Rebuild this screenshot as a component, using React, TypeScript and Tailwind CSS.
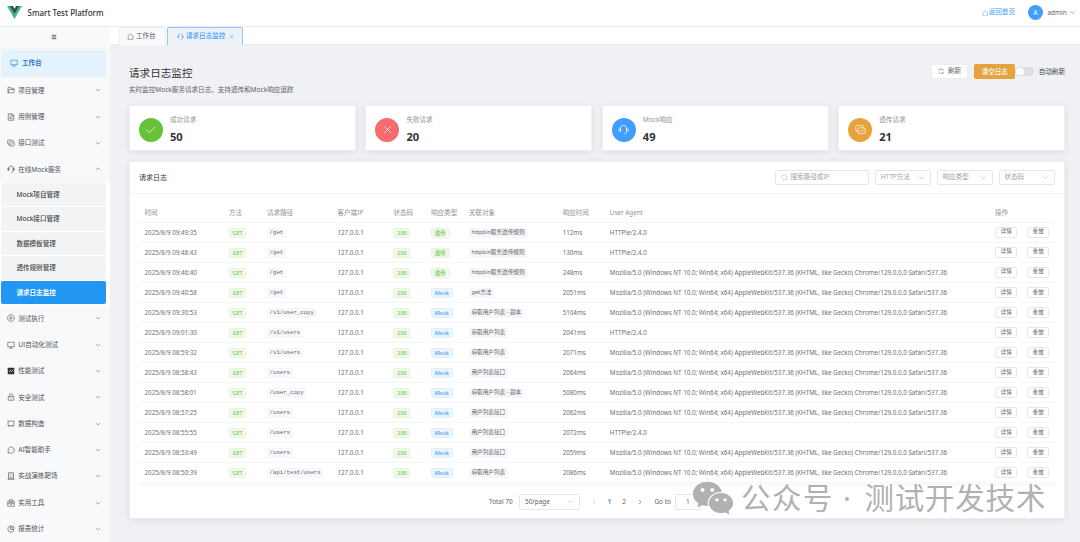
import React from "react";
import { AiFillWechat } from "react-icons/ai";

const shapes: Record<string, React.ReactNode> = {
  house: <path d="M2.5 6.3v8.2h11V6.3L8 1.7z" />,
  monitor: <path d="M1.5 2.5h13v9h-13zM8 11.5v2.7M4.5 14.2h7" />,
  folder: <path d="M2 13.5v-11h4.500l1.500 2h5.500v2.500M2 13.500 4.200 7H15l-2 6.500z" />,
  doc: <path d="M2.500 1.500h7.500l3.500 3.500v9.500h-11zM9.800 1.700v3.500h3.500M5 8h6M5 11h6M5 5h2" />,
  link: <path d="M5 10.500H3.800A2.800 2.800 0 0 1 1 7.700V4.800A2.800 2.800 0 0 1 3.800 2h5.400A2.800 2.800 0 0 1 12 4.800M11 5.500h1.200A2.800 2.800 0 0 1 15 8.300v2.900a2.800 2.800 0 0 1-2.800 2.800H6.800A2.800 2.800 0 0 1 4 11.200V8.300a2.800 2.800 0 0 1 2.800-2.800zM6.500 10.500h2.700A2.800 2.800 0 0 0 12 7.700" />,
  headset: <path d="M3.500 10.800V6.500a4.500 4.500 0 0 1 9 0v4.300c0 2.200-1.500 3.700-4 3.700M3.500 6.200C2 6.200 1 7.200 1 8.500s1 2.300 2.500 2.300zM12.500 6.200C14 6.200 15 7.200 15 8.500s-1 2.300-2.500 2.300z" />,
  play: <path d="M8 1.200a6.800 6.800 0 1 0 .01 0zM6.300 5v6l4.800-3z" />,
  lock: <path d="M2.500 7h11v7.500h-11zM4.800 7V4.500a3.200 3.200 0 0 1 6.400 0V7M8 9.500v2.500" />,
  board: <path d="M1 2.200h14M2.200 2.200v9h11.600v-9M5.500 11.200 4 14.500M10.500 11.200l1.500 3.300" />,
  chat: <path d="M2 14.300 2.600 11A6.300 6.300 0 1 1 5 13.700zM5 8h.8M7.600 8h.8M10.200 8h.8" />,
  building: <path d="M3 14.500v-13h10v13M1 14.500h14M5.300 4h1.500M9.200 4h1.500M5.300 7h1.500M9.200 7h1.500M6 14.500v-4h4v4" />,
  suitcase: <path d="M1.500 4.500h13v10h-13zM5 4.500v-3h6v3M1.500 8.500h4M10.500 8.500h4M6 7h4v3.500H6z" />,
  pie: <path d="M7 1.800a6.300 6.300 0 1 0 7.200 7.200H7zM9.500 1.300a6 6 0 0 1 5 5h-5z" />,
  down: <path d="m2.500 5.500 5.500 5.500 5.500-5.500" />,
  up: <path d="M2.500 10.500 8 5l5.500 5.500" />,
  left: <path d="M10.500 2.500 5 8l5.500 5.500" />,
  right: <path d="M5.500 2.500 11 8l-5.500 5.500" />,
  close: <path d="m3 3 10 10M13 3 3 13" />,
  check: <path d="m2 8.500 4.200 4.200L14.300 4" />,
  search: <path d="M7.500 1.700a5.800 5.800 0 1 0 .01 0zM11.700 11.700l2.800 2.800" />,
  refresh: <path d="M13.800 7A6 6 0 0 0 3 4.500V2M3 4.700h3M2.200 9A6 6 0 0 0 13 11.500V14M13 11.300h-3" />,
  menu: <path d="M2 3.500h12M2 8h12M2 12.500h12" />,
};

function Icon({ name, className = "size-[8px]", w = 1.3 }: { name: string; className?: string; w?: number }) {
  if (name === "chart")
    return (
      <svg viewBox="0 0 16 16" className={`shrink-0 ${className}`}>
        <rect x="1.500" y="1.500" width="13" height="13" rx="1" fill="#303133" />
        <path d="m4 9.500 2.800-2.500 2.400 2L12.500 5.500" fill="none" stroke="#fff" strokeWidth="1.400" />
      </svg>
    );
  return (
    <svg viewBox="0 0 16 16" className={`shrink-0 ${className}`} fill="none" stroke="currentColor" strokeWidth={w}>
      {shapes[name]}
    </svg>
  );
}

function MenuRow({ icon, label, open }: { icon: string; label: string; open?: boolean }) {
  return (
    <div className="flex h-[26.320px] shrink-0 items-center pl-[6.500px] pr-[9px] text-[#505256]">
      <Icon name={icon} className="size-[8px]" w={1.250} />
      <span className="ml-[3.700px] flex-1 pt-[1px]">{label}</span>
      <Icon name={open ? "up" : "down"} className="size-[6px]" w={1.300} />
    </div>
  );
}

const topMenu = [
  ["folder", "项目管理"],
  ["doc", "用例管理"],
  ["link", "接口测试"],
];
const subMenu = ["Mock项目管理", "Mock接口管理", "数据模板管理", "透传规则管理", "请求日志监控"];
const bottomMenu = [
  ["play", "测试执行"],
  ["monitor", "UI自动化测试"],
  ["chart", "性能测试"],
  ["lock", "安全测试"],
  ["board", "数据构造"],
  ["chat", "AI智能助手"],
  ["building", "实战演练靶场"],
  ["suitcase", "实用工具"],
  ["pie", "报表统计"],
];

const stats = [
  { icon: "check", label: "成功请求", value: 50, bg: "bg-[#67c23a]" },
  { icon: "close", label: "失败请求", value: 20, bg: "bg-[#f56c6c]" },
  { icon: "headset", label: "Mock响应", value: 49, bg: "bg-[#409eff]" },
  { icon: "link", label: "透传请求", value: 21, bg: "bg-[#e6a23c]" },
];

const CHROME =
  "Mozilla/5.0 (Windows NT 10.0; Win64; x64) AppleWebKit/537.36 (KHTML, like Gecko) Chrome/129.0.0.0 Safari/537.36";
const HTTPIE = "HTTPie/2.4.0";

const rows: [string, string, string, string, string, string][] = [
  ["09:49:35", "/get", "透传", "httpbin服务透传规则", "112ms", HTTPIE],
  ["09:48:43", "/get", "透传", "httpbin服务透传规则", "130ms", HTTPIE],
  ["09:46:40", "/get", "透传", "httpbin服务透传规则", "248ms", CHROME],
  ["09:40:58", "/get", "Mock", "get方法", "2051ms", CHROME],
  ["09:30:53", "/v1/user_copy", "Mock", "获取用户列表 - 副本", "5104ms", CHROME],
  ["09:01:30", "/v1/users", "Mock", "获取用户列表", "2041ms", HTTPIE],
  ["08:59:32", "/v1/users", "Mock", "获取用户列表", "2071ms", CHROME],
  ["08:58:43", "/users", "Mock", "用户列表接口", "2064ms", CHROME],
  ["08:58:01", "/user_copy", "Mock", "获取用户列表 - 副本", "5080ms", CHROME],
  ["08:57:25", "/users", "Mock", "用户列表接口", "2062ms", CHROME],
  ["08:55:55", "/users", "Mock", "用户列表接口", "2072ms", HTTPIE],
  ["08:53:49", "/users", "Mock", "用户列表接口", "2059ms", CHROME],
  ["08:50:39", "/api/test/users", "Mock", "获取用户列表", "2086ms", CHROME],
];

const gridCols =
  "grid grid-cols-[84.500px_37.900px_70.600px_56px_37.500px_37.800px_93.900px_47.200px_385.100px_65.500px] items-center pl-[5.500px] border-b border-[#f3f5f9]";

const tagBase = "mt-[1px] flex h-[10px] items-center justify-center rounded-[2px] border pt-[1px] text-[5.500px] font-medium";
const greenTag = `${tagBase} border-[#e7f5e0] bg-[#f0f9eb] text-[#7bca53]`;
const blueTag = `${tagBase} border-[#e0efff] bg-[#ecf5ff] text-[#409eff]`;
const codeTag = "flex h-[9.500px] w-fit items-center rounded-[1.500px] bg-[#f5f7fa] px-[2.700px] text-[#66686c]";
const smallButton =
  "flex h-[11.500px] w-[22.500px] items-center justify-center rounded-[1.500px] border border-[#e6e8ed] bg-white text-[5.600px] text-[#606266]";

function Select({ label }: { label: string }) {
  return (
    <div className="flex h-[15px] w-[56px] items-center justify-between rounded-[1.500px] border border-[#e4e6ec] pl-[4.500px] pr-[5px] text-[#a0a3a9]">
      <span>{label}</span>
      <Icon name="down" className="size-[7px]" w={1.200} />
    </div>
  );
}

export default function App() {
  return (
    <div className="flex h-[542px] w-[1080px] flex-col overflow-hidden whitespace-nowrap bg-[#f0f1f5] font-['Noto_Sans','Noto_Sans_CJK_SC',sans-serif] text-[6.570px] leading-none text-[#606266]">
      <header className="flex h-[26.500px] shrink-0 items-center border-b border-[#ebecef] bg-white pl-[7px] pr-[4px]">
        <svg viewBox="0 0 256 221" className="h-[13px] w-[15px]">
          <path fill="#41b883" d="M204.800 0H256L128 220.800 0 0h97.920L128 51.200 157.440 0z" />
          <path fill="#35495e" d="M50.560 0 128 133.120 204.800 0h-47.360L128 51.200 97.920 0z" />
        </svg>
        <span className="ml-[5.500px] text-[8px] font-medium text-[#303133]">Smart Test Platform</span>
        <div className="ml-auto flex items-center">
          <Icon name="house" className="size-[6.500px] text-[#409eff]" w={1.200} />
          <span className="text-[#409eff]">返回首页</span>
          <span className="ml-[13px] flex size-[15px] items-center justify-center rounded-full bg-[#409eff] text-[6.200px] text-white">A</span>
          <span className="ml-[4.500px] w-[21.500px] pt-[1px] text-[6.400px]">admin</span>
          <Icon name="down" className="size-[7px]" w={1.100} />
        </div>
      </header>

      <div className="flex min-h-0 flex-1">
        <aside className="flex w-[110px] shrink-0 flex-col overflow-hidden bg-[#f8f9fb]">
          <div className="flex h-[22px] shrink-0 items-center justify-center border-b border-[#f1f2f5] pr-[2px]">
            <Icon name="menu" className="size-[6px] text-[#303133]" w={1.900} />
          </div>
          <div className="ml-[1.400px] mt-[1.500px] flex h-[26.500px] w-[105px] shrink-0 items-center rounded-[2px] bg-[#e3f2fd] pl-[9px] font-bold text-[#1976d2]">
            <Icon name="monitor" className="size-[8px]" w={1.150} />
            <span className="ml-[3.500px] pt-[1px]">工作台</span>
          </div>
          <div className="mt-[0.800px] flex shrink-0 flex-col">
            {topMenu.map(([icon, label]) => (
              <MenuRow key={label} icon={icon} label={label} />
            ))}
            <MenuRow icon="headset" label="在线Mock服务" open />
          </div>
          <div className="flex shrink-0 flex-col bg-white pl-[1.400px]">
            {subMenu.map((label) => (
              <div key={label} className="h-[24.400px] pt-[0.500px]">
                <div
                  className={
                    label === "请求日志监控"
                      ? "flex h-[23.400px] w-[105px] items-center rounded-[2px] bg-[#2196f3] pl-[15px] pt-[1px] font-bold text-white"
                      : "flex h-[23.400px] w-[105px] items-center rounded-[2px] bg-[#f2f3f5] pl-[15px] pt-[1px] font-medium text-[#45474b]"
                  }
                >
                  {label}
                </div>
              </div>
            ))}
          </div>
          <div className="mt-[0.700px] flex shrink-0 flex-col">
            {bottomMenu.map(([icon, label]) => (
              <MenuRow key={label} icon={icon} label={label} />
            ))}
          </div>
        </aside>

        <div className="flex min-w-0 flex-1 flex-col">
          <div className="flex h-[18.500px] shrink-0 items-start gap-[1.500px] border-b border-[#e9ebf0] bg-white pl-[9px] pt-[0.500px]">
            <div className="flex h-[17.500px] w-[46.500px] items-center rounded-t-[2px] border border-b-0 border-[#eeeff3] bg-[#fafafa] pl-[7px]">
              <Icon name="house" className="size-[7px]" w={1.200} />
              <span className="ml-[2px]">工作台</span>
            </div>
            <div className="flex h-[17.500px] w-[75.500px] items-center rounded-t-[2px] border border-b-0 border-[#8fc6ff] bg-[#eef1f6] pl-[9px] font-medium text-[#409eff]">
              <Icon name="headset" className="size-[7px]" w={1.200} />
              <span className="ml-[2px] w-[40px]">请求日志监控</span>
              <Icon name="close" className="ml-[2.500px] size-[5.500px]" w={1.500} />
            </div>
          </div>

          <main className="flex flex-1 flex-col pl-[19px] pr-[15px]">
            <div className="flex h-[59.500px] justify-between">
              <div className="flex flex-col pt-[22.500px]">
                <h1 className="text-[10.600px] leading-[11px] text-[#303133]">请求日志监控</h1>
                <p className="mt-[8.500px]">实时监控Mock服务请求日志，支持透传和Mock响应追踪</p>
              </div>
              <div className="mt-[19px] flex h-[15px] items-center">
                <div className="flex h-[14.500px] w-[37px] items-center justify-center gap-[3px] rounded-[1.500px] border border-[#eceef2] bg-white">
                  <Icon name="refresh" className="size-[6.500px]" w={1.200} />
                  刷新
                </div>
                <div className="ml-[6px] flex h-[15px] w-[41px] items-center justify-center rounded-[2px] bg-[#e6a23c] pt-[1px] font-medium text-white">清空日志</div>
                <div className="flex h-[9.500px] w-[19px] items-center rounded-full bg-[#dcdfe6] pl-[1px]">
                  <span className="size-[7.500px] rounded-full bg-white" />
                </div>
                <span className="ml-[4.500px] pt-[1px] text-[#45474b]">自动刷新</span>
              </div>
            </div>

            <div className="grid h-[46.500px] shrink-0 grid-cols-4 gap-[9.700px]">
              {stats.map((s) => (
                <div key={s.label} className="flex items-center rounded-[2px] border border-[#eff0f3] bg-white pl-[9px] pt-[4px] shadow-[0_1px_6px_rgba(0,0,0,0.09)]">
                  <span className={`flex size-[23.700px] items-center justify-center rounded-full text-white ${s.bg}`}>
                    <Icon name={s.icon} className="size-[11px]" w={1} />
                  </span>
                  <div className="ml-[7.300px] flex flex-col">
                    <span className="text-[#909399]">{s.label}</span>
                    <span className="mt-[9px] text-[11.100px] font-bold leading-[10.500px] text-[#303133]">{s.value}</span>
                  </div>
                </div>
              ))}
            </div>

            <section className="mt-[10px] flex h-[358px] flex-col rounded-[2px] border border-[#eff0f3] bg-white shadow-[0_1px_6px_rgba(0,0,0,0.09)]">
              <div className="flex h-[31.500px] shrink-0 items-center border-b border-[#eff1f5] px-[9px]">
                <span className="flex-1 text-[7px] text-[#303133]">请求日志</span>
                <div className="flex gap-[6px]">
                  <div className="flex h-[15px] w-[94px] items-center rounded-[1.500px] border border-[#e4e6ec] pl-[4.500px] text-[#a0a3a9]">
                    <Icon name="search" className="size-[7px]" w={1.100} />
                    <span className="ml-[3px]">搜索路径或IP</span>
                  </div>
                  <Select label="HTTP方法" />
                  <Select label="响应类型" />
                  <Select label="状态码" />
                </div>
              </div>

              <div className="mx-[9px] mt-[10px] border-b border-[#f5f6fa] pb-[1.500px]">
                <div className={`${gridCols} h-[19px] pt-[1.500px] text-[#909399]`}>
                  <span>时间</span>
                  <span>方法</span>
                  <span>请求路径</span>
                  <span>客户端IP</span>
                  <span>状态码</span>
                  <span>响应类型</span>
                  <span>关联对象</span>
                  <span>响应时间</span>
                  <span className="text-[6.300px]">User Agent</span>
                  <span>操作</span>
                </div>
                {rows.map(([time, path, type, target, ms, agent]) => (
                  <div key={time} className={`${gridCols} h-[20.020px] pt-[1.500px] text-[6.240px] text-[#6c6e72]`}>
                    <span>2025/8/9 {time}</span>
                    <span className={`${greenTag} w-[17px]`}>GET</span>
                    <span className={`${codeTag} font-['Liberation_Mono',monospace] text-[5.680px]`}>{path}</span>
                    <span>127.0.0.1</span>
                    <span className={`${greenTag} w-[17px]`}>200</span>
                    {type === "Mock" ? (
                      <span className={`${blueTag} w-[21.700px]`}>Mock</span>
                    ) : (
                      <span className={`${greenTag} w-[18.700px]`}>透传</span>
                    )}
                    <span className={`${codeTag} text-[5.630px]`}>{target}</span>
                    <span>{ms}</span>
                    <span>{agent}</span>
                    <span className="mb-[1px] flex gap-[9.500px]">
                      <span className={smallButton}>详情</span>
                      <span className={smallButton}>重放</span>
                    </span>
                  </div>
                ))}
              </div>

              <div className="relative mt-[9px] flex h-[15.500px] items-center pl-[359px] text-[6.450px]">
                <span className="w-[30px] pt-[1px]">Total 70</span>
                <div className="flex h-[15.500px] w-[61px] items-center justify-between rounded-[1.500px] border border-[#e4e6ec] px-[5px]">
                  <span className="pt-[1px]">50/page</span>
                  <Icon name="down" className="size-[7px] text-[#a8abb2]" w={1.200} />
                </div>
                <Icon name="left" className="ml-[11px] size-[6px] text-[#a8abb2]" />
                <span className="ml-[10.500px] pt-[1px] font-bold text-[#409eff]">1</span>
                <span className="ml-[11px] pt-[1px]">2</span>
                <Icon name="right" className="ml-[11px] size-[6px]" w={1.600} />
                <span className="ml-[11.500px] w-[20.500px] pt-[1px]">Go to</span>
                <div className="flex h-[15.500px] w-[26px] items-center justify-center rounded-[1.500px] border border-[#e4e6ec]">1</div>
                <div className="absolute left-[560px] top-[-18px] flex h-[44px] items-center text-[#b1b1b1]">
                  <AiFillWechat className="size-[46px]" />
                  <span className="ml-[5px] text-[29.500px] leading-none tracking-[1.500px]">公众号</span>
                  <span className="ml-[9px] text-[29.500px] leading-none">·</span>
                  <span className="ml-[13.500px] text-[29.500px] leading-none tracking-[0.800px]">测试开发技术</span>
                </div>
              </div>
            </section>
          </main>
        </div>
      </div>
    </div>
  );
}
